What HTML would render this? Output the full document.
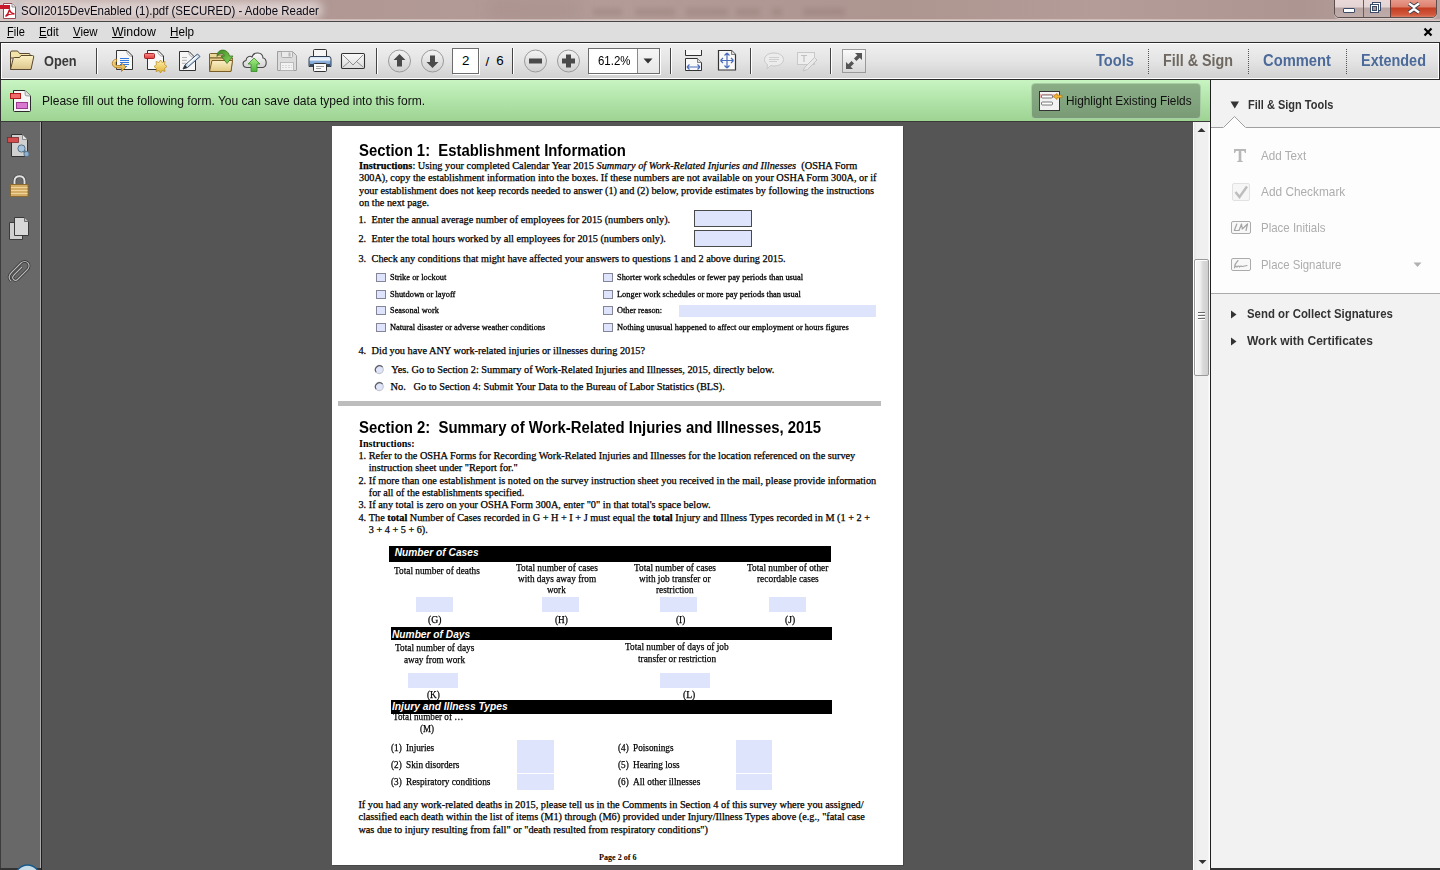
<!DOCTYPE html>
<html><head><meta charset="utf-8">
<style>
*{margin:0;padding:0;box-sizing:border-box}
html,body{width:1440px;height:870px;overflow:hidden;background:#555}
body{position:relative;font-family:"Liberation Sans",sans-serif}
.a{position:absolute}
.t{position:absolute;white-space:pre;transform-origin:0 0}
.sv{position:absolute;overflow:visible}
</style></head><body>
<!-- TITLE BAR -->
<div class="a" style="left:0;top:0;width:1440px;height:21px;background:linear-gradient(90deg,#c9b5b2 0px,#b9a4a0 120px,#b09793 300px,#b39c98 600px,#ad9590 900px,#b49c98 1100px,#ad9692 1300px,#b8a3a0 1440px)"></div>
<div class="a" style="left:0;top:19px;width:1440px;height:1px;background:#cdbbb8"></div>
<div class="a" style="left:0;top:20px;width:1440px;height:1px;background:#d8c8c6"></div>
<div class="a" style="left:0;top:21px;width:1440px;height:1px;background:#464646"></div>
<!-- bg blur words -->
<div class="a" style="left:593px;top:8px;width:29px;height:8px;background:rgba(105,80,76,0.15);filter:blur(2px);border-radius:3px"></div><div class="a" style="left:635px;top:8px;width:40px;height:8px;background:rgba(105,80,76,0.15);filter:blur(2px);border-radius:3px"></div><div class="a" style="left:686px;top:8px;width:42px;height:8px;background:rgba(105,80,76,0.15);filter:blur(2px);border-radius:3px"></div><div class="a" style="left:736px;top:8px;width:24px;height:8px;background:rgba(105,80,76,0.15);filter:blur(2px);border-radius:3px"></div><div class="a" style="left:772px;top:8px;width:10px;height:8px;background:rgba(105,80,76,0.15);filter:blur(2px);border-radius:3px"></div><div class="a" style="left:803px;top:8px;width:42px;height:8px;background:rgba(105,80,76,0.15);filter:blur(2px);border-radius:3px"></div><div class="a" style="left:490px;top:0;width:90px;height:20px;background:rgba(120,90,86,0.10);filter:blur(8px)"></div>
<!-- title glow -->
<div class="a" style="left:0;top:0;width:330px;height:20px;overflow:hidden"><div class="a" style="left:-6px;top:1px;width:328px;height:18px;background:rgba(228,218,217,0.85);filter:blur(5px);border-radius:8px"></div></div>
<div class="a" style="left:14px;top:2px;width:8px;height:17px;background:rgba(170,180,195,0.45);filter:blur(2px)"></div>
<!-- title icon -->
<svg class="sv" style="left:0;top:0" width="18" height="20" viewBox="0 0 18 20">
 <path d="M3.5 3.5 H12 L15.5 7 V18.5 H3.5 Z" fill="#fff" stroke="#9a4a52" stroke-width="1"/>
 <path d="M12 3.5 V7 H15.5" fill="#eee" stroke="#777" stroke-width="0.8"/>
 <rect x="0" y="5" width="10" height="4" fill="#c8182a"/>
 <path d="M5.5 16.5 C7.5 14.5 9 12 9.5 9.5 C10 12 11.5 13.5 14.5 14 C11 13.5 8 14.5 5.5 16.5 Z" fill="none" stroke="#c81020" stroke-width="1.3"/>
</svg>
<!-- window buttons -->
<div class="a" style="left:1334px;top:-3px;width:103px;height:21px;border:1px solid #5b4f4e;border-radius:0 0 5px 5px;overflow:hidden;box-shadow:0 1px 0 rgba(255,255,255,.5)">
  <div class="a" style="left:0;top:0;width:28px;height:20px;background:linear-gradient(#ead9d8 0,#e3d4d3 9px,#b8a5a3 10px,#c0aeac 20px)"></div>
  <div class="a" style="left:28px;top:0;width:1px;height:20px;background:#6a5c5b"></div>
  <div class="a" style="left:29px;top:0;width:26px;height:20px;background:linear-gradient(#ead9d8 0,#e3d4d3 9px,#b8a5a3 10px,#c0aeac 20px)"></div>
  <div class="a" style="left:55px;top:0;width:1px;height:20px;background:#6a3c38"></div>
  <div class="a" style="left:56px;top:0;width:47px;height:20px;background:linear-gradient(#eaa294 0,#dd7f6c 9px,#c33d22 10px,#d25a3d 17px,#e0907e 20px)"></div>
</div>
<div class="a" style="left:1343px;top:8px;width:12px;height:5px;background:#fff;border:1px solid #3b4a66;border-radius:1px"></div>
<svg class="sv" style="left:1369px;top:1px" width="14" height="14" viewBox="0 0 14 14">
 <rect x="3.5" y="1.5" width="8" height="8" fill="#fff" stroke="#3b4a66"/>
 <rect x="1.5" y="3.5" width="8" height="8" fill="#fff" stroke="#3b4a66"/>
 <rect x="3.5" y="5.5" width="4" height="4" fill="#a99" stroke="#3b4a66"/>
</svg>
<svg class="sv" style="left:1406px;top:2px" width="16" height="12" viewBox="0 0 16 12">
 <path d="M3 1.5 L8 5 L13 1.5 M3 10.5 L8 7 L13 10.5" stroke="#3b3b4a" stroke-width="4" fill="none"/>
 <path d="M3 1.5 L8 5 L13 1.5 M3 10.5 L8 7 L13 10.5" stroke="#fff" stroke-width="2.4" fill="none"/>
</svg>
<!-- MENU BAR -->
<div class="a" style="left:0;top:22px;width:1440px;height:20px;background:#dedede"></div>
<div class="a" style="left:0;top:42px;width:1440px;height:1px;background:#2e2e2e"></div>
<svg class="sv" style="left:1423px;top:27px" width="10" height="10" viewBox="0 0 10 10"><path d="M1.5 1.5 L8.5 8.5 M8.5 1.5 L1.5 8.5" stroke="#000" stroke-width="2.2"/></svg>
<!-- TOOLBAR -->
<div class="a" style="left:0;top:42px;width:1440px;height:38px;background:#2b2b2b"></div>
<div class="a" style="left:1px;top:43px;width:1438px;height:36px;background:#fff"></div>
<div class="a" style="left:2px;top:44px;width:1436px;height:34px;background:linear-gradient(#efefef,#e4e4e4 50%,#d2d2d2)"></div>
<!-- GREEN BAR -->
<div class="a" style="left:0;top:80px;width:1210px;height:41px;background:linear-gradient(#c8f4c2,#b1e4a9 50%,#9dd393)"></div>
<div class="a" style="left:0;top:80px;width:1px;height:42px;background:#333"></div>
<div class="a" style="left:0;top:121px;width:1210px;height:1px;background:#3a3a3a"></div>
<!-- toolbar separators -->
<div class="a" style="left:96px;top:48px;width:1px;height:26px;background:#444;box-shadow:1px 0 0 #fff"></div>
<div class="a" style="left:376px;top:48px;width:1px;height:26px;background:#444;box-shadow:1px 0 0 #fff"></div>
<div class="a" style="left:512px;top:48px;width:1px;height:26px;background:#444;box-shadow:1px 0 0 #fff"></div>
<div class="a" style="left:670px;top:48px;width:1px;height:26px;background:#444;box-shadow:1px 0 0 #fff"></div>
<div class="a" style="left:750px;top:48px;width:1px;height:26px;background:#444;box-shadow:1px 0 0 #fff"></div>
<div class="a" style="left:830px;top:48px;width:1px;height:26px;background:#444;box-shadow:1px 0 0 #fff"></div>
<div class="a" style="left:1148px;top:49px;width:1px;height:25px;border-left:1px dotted #555"></div>
<div class="a" style="left:1248px;top:49px;width:1px;height:25px;border-left:1px dotted #555"></div>
<div class="a" style="left:1346px;top:49px;width:1px;height:25px;border-left:1px dotted #555"></div>
<!-- Open folder -->
<svg class="sv" style="left:9px;top:50px" width="26" height="21" viewBox="0 0 26 21">
 <defs><linearGradient id="fg" x1="0" y1="0" x2="0" y2="1"><stop offset="0" stop-color="#fcf2c4"/><stop offset="1" stop-color="#dcc48a"/></linearGradient></defs>
 <path d="M1.5 2.5 Q1.5 1 3 1 H8 Q9 1 9.5 2 L10.5 3.5 H20 Q21 3.5 21 4.5 V8 H1.5 Z" fill="#f4e4a8" stroke="#5a4a34" stroke-width="1"/>
 <path d="M1.5 2 V19.5" stroke="#5a4a34" stroke-width="1"/>
 <path d="M1.5 19.5 L4.2 8.5 Q4.5 7.5 5.5 7.5 H10.5 L12 5.5 H23.5 Q25 5.5 24.7 7 L22 19.5 Z" fill="url(#fg)" stroke="#5a4a34" stroke-width="1" stroke-linejoin="round"/>
</svg>
<!-- icon1: create pdf -->
<svg class="sv" style="left:110px;top:48px" width="26" height="26" viewBox="0 0 26 26">
 <defs><linearGradient id="ag" x1="0" y1="0" x2="0" y2="1"><stop offset="0" stop-color="#fbe9a0"/><stop offset="1" stop-color="#dca83a"/></linearGradient>
 <linearGradient id="rg" x1="0" y1="0" x2="0" y2="1"><stop offset="0" stop-color="#ff8a8a"/><stop offset="1" stop-color="#e03a3a"/></linearGradient>
 <linearGradient id="sg" x1="0" y1="0" x2="0" y2="1"><stop offset="0" stop-color="#fff2b0"/><stop offset="1" stop-color="#e0b030"/></linearGradient></defs>
 <path d="M6.5 2.5 H17 L22.5 8 V21.5 H6.5 Z" fill="#f8f8f8" stroke="#333" stroke-width="1" stroke-linejoin="round"/>
 <path d="M16.5 3 Q17.5 8 22 8.5" fill="none" stroke="#999" stroke-width="0.8"/>
 <path d="M10 10.5 H19 M10 12.5 H19 M10 14.5 H19 M10 16.5 H19 M13 18.5 H17" stroke="#1a6ad8" stroke-width="0.9"/>
 <path d="M6.5 11 C1 12 0.5 19 7 20 L11.5 20 L11.5 23.5 L16 19 L11.5 15 L11.5 17.5 L7.5 17.5 C4.5 17 4.5 14 6.5 13.5 Z" fill="url(#ag)" stroke="#a87418" stroke-width="0.8" stroke-linejoin="round"/>
</svg>
<!-- icon2: combine -->
<svg class="sv" style="left:143px;top:48px" width="26" height="26" viewBox="0 0 26 26">
 <path d="M4.5 2.5 H15 L20.5 8 V21.5 H4.5 Z" fill="#f8f8f8" stroke="#333" stroke-width="1" stroke-linejoin="round"/>
 <path d="M14.5 3 Q15.5 8 20 8.5" fill="none" stroke="#999" stroke-width="0.8"/>
 <rect x="1.5" y="5.5" width="10" height="5" rx="1" fill="url(#rg)" stroke="#9a1a1a" stroke-width="0.9"/>
 <path d="M17.5 12 L19 14.5 L22 13.5 L21.5 16.5 L24 18.5 L21.5 20.5 L22 23.5 L19 22.5 L17.5 25 L16 22.5 L13 23.5 L13.5 20.5 L11 18.5 L13.5 16.5 L13 13.5 L16 14.5 Z" fill="url(#sg)" stroke="#b88a20" stroke-width="0.7"/>
</svg>
<!-- icon3: edit doc -->
<svg class="sv" style="left:176px;top:48px" width="26" height="26" viewBox="0 0 26 26">
 <path d="M3.5 3.5 H13 L19.5 10 V22.5 H3.5 Z" fill="#f6f6f6" stroke="#333" stroke-width="1" stroke-linejoin="round"/>
 <path d="M12.5 4 Q13.5 9 18 9.5" fill="none" stroke="#999" stroke-width="0.8"/>
 <path d="M6 9.5 H11 M6 12.3 H11 M6 15.3 H10" stroke="#aaa" stroke-width="0.9"/>
 <path d="M7 21 L9 17 L21.5 6 L24 8.5 L11.5 19.5 Z" fill="#cfe2f4" stroke="#3a4e6a" stroke-width="1" stroke-linejoin="round"/>
 <path d="M12 16 L20.5 8.5" stroke="#fff" stroke-width="1.4"/>
 <path d="M7 21 L9 17 L11.5 19.5 Z" fill="#333"/>
</svg>
<!-- icon4: open folder green arrow -->
<svg class="sv" style="left:208px;top:48px" width="26" height="26" viewBox="0 0 26 26">
 <defs><linearGradient id="fg2" x1="0" y1="0" x2="0" y2="1"><stop offset="0" stop-color="#fbf0c8"/><stop offset="1" stop-color="#e2c880"/></linearGradient>
 <linearGradient id="gg" x1="0" y1="0" x2="1" y2="1"><stop offset="0" stop-color="#3e8a20"/><stop offset="1" stop-color="#8ad860"/></linearGradient></defs>
 <path d="M1.5 6.5 Q1.5 5.5 2.5 5.5 H9 L10 7 H15 V10 H1.5 Z" fill="#ecd898" stroke="#7a5e2a" stroke-width="1"/>
 <path d="M1.5 6 V23 H23 L24.5 10 H1.5" fill="#e6cf8c" stroke="#7a5e2a" stroke-width="1"/>
 <path d="M1.5 23.5 L4 12.5 H24.5 L23 23.5 Z" fill="url(#fg2)" stroke="#7a5e2a" stroke-width="1" stroke-linejoin="round"/>
 <path d="M9 8.5 C8.5 0.5 19.5 -0.5 21.5 8 L25 8 L19 15.5 L13 8 L16.5 8 C15 4.5 11.5 4.5 9 8.5 Z" fill="url(#gg)" stroke="#2e6a18" stroke-width="0.7" stroke-linejoin="round"/>
</svg>
<!-- icon5: cloud -->
<svg class="sv" style="left:241px;top:49px" width="27" height="24" viewBox="0 0 27 24">
 <defs><linearGradient id="clg" x1="0" y1="0" x2="0" y2="1"><stop offset="0" stop-color="#fafafa"/><stop offset="1" stop-color="#d4d4d4"/></linearGradient>
 <linearGradient id="ug" x1="0" y1="0" x2="0" y2="1"><stop offset="0" stop-color="#a8ec88"/><stop offset="1" stop-color="#4cb43a"/></linearGradient></defs>
 <path d="M6 18.5 C1.5 18.5 0.5 12.5 5 11.5 C5 7.5 9 6.5 11 8 C12.5 2.5 21.5 2.5 22 9 C26 9.5 26.5 17.5 22 18.5 Z" fill="url(#clg)" stroke="#4a4a4a" stroke-width="1.1"/>
 <path d="M13 9 L19 15 H16 V22.5 H10 V15 H7 Z" fill="url(#ug)" stroke="#3a8a2a" stroke-width="0.8" stroke-linejoin="round"/>
</svg>
<!-- icon6: save (disabled) -->
<svg class="sv" style="left:276px;top:50px" width="22" height="22" viewBox="0 0 22 22">
 <path d="M1.5 1.5 H16.5 L20.5 5.5 V20 Q20.5 20.5 20 20.5 H2 Q1.5 20.5 1.5 20 Z" fill="#dcdcdc" stroke="#9e9e9e" stroke-width="1"/>
 <rect x="5.5" y="1.5" width="11" height="6" rx="1" fill="#eaeaea" stroke="#a8a8a8" stroke-width="0.9"/>
 <rect x="12.5" y="2.5" width="2" height="4" fill="#b8b8b8"/>
 <rect x="4.5" y="12.5" width="13" height="8" fill="#f2f2f2" stroke="#b0b0b0" stroke-width="0.8"/>
 <path d="M6 15.5 H16 M6 17.5 H16" stroke="#cfcfcf" stroke-width="0.8" stroke-dasharray="2 1"/>
</svg>
<!-- icon7: print -->
<svg class="sv" style="left:307px;top:48px" width="26" height="26" viewBox="0 0 26 26">
 <defs><linearGradient id="pg" x1="0" y1="0" x2="0" y2="1"><stop offset="0" stop-color="#cfe0f4"/><stop offset="0.35" stop-color="#f4f8fc"/><stop offset="0.45" stop-color="#90b4e0"/><stop offset="1" stop-color="#6a94c8"/></linearGradient></defs>
 <rect x="6.5" y="1.5" width="13" height="9" rx="1" fill="#f6f6f6" stroke="#333" stroke-width="1"/>
 <path d="M4 8.5 H22 Q24 8.5 24 11 V18.5 H2 V11 Q2 8.5 4 8.5 Z" fill="url(#pg)" stroke="#2e3e52" stroke-width="1"/>
 <rect x="3" y="16" width="20" height="2.5" fill="#3a4a5a"/>
 <rect x="6.5" y="15.5" width="13" height="8" rx="1" fill="#fafafa" stroke="#333" stroke-width="1"/>
 <path d="M9 18.5 H17 M9 20.5 H14" stroke="#888" stroke-width="0.8"/>
</svg>
<!-- icon8: envelope -->
<svg class="sv" style="left:340px;top:52px" width="26" height="18" viewBox="0 0 26 18">
 <defs><linearGradient id="eg" x1="0" y1="0" x2="0" y2="1"><stop offset="0" stop-color="#fafafa"/><stop offset="1" stop-color="#dcdcdc"/></linearGradient></defs>
 <rect x="1.5" y="1.5" width="23" height="15" rx="1.2" fill="url(#eg)" stroke="#333" stroke-width="1.1"/>
 <path d="M3 3 L13 13 L23 3 M3 15 L9.5 9.5 M23 15 L16.5 9.5" stroke="#777" stroke-width="0.8" fill="none"/>
</svg>
<!-- nav circles -->
<svg class="sv" style="left:387px;top:49px" width="25" height="24" viewBox="0 0 25 24">
 <circle cx="12.5" cy="12" r="11" fill="url(#cg)" stroke="#9a9a9a"/>
 <defs><linearGradient id="cg" x1="0" y1="0" x2="0" y2="1"><stop offset="0" stop-color="#f4f4f4"/><stop offset="1" stop-color="#d0d0d0"/></linearGradient></defs>
 <path d="M12.5 5 L18.5 11 H15 V17.5 H10 V11 H6.5 Z" fill="#4a4a4a"/>
</svg>
<svg class="sv" style="left:420px;top:49px" width="25" height="24" viewBox="0 0 25 24">
 <circle cx="12.5" cy="12" r="11" fill="url(#cg)" stroke="#9a9a9a"/>
 <path d="M12.5 19 L18.5 13 H15 V6.5 H10 V13 H6.5 Z" fill="#4a4a4a"/>
</svg>
<div class="a" style="left:452px;top:48px;width:27px;height:26px;background:#fff;border:1px solid #6d6d6d;box-shadow:1px 1px 0 #fff"></div>
<svg class="sv" style="left:523px;top:49px" width="25" height="24" viewBox="0 0 25 24">
 <circle cx="12.5" cy="12" r="11" fill="url(#cg)" stroke="#9a9a9a"/>
 <rect x="6" y="9.5" width="13" height="5" fill="#4a4a4a"/>
</svg>
<svg class="sv" style="left:556px;top:49px" width="25" height="24" viewBox="0 0 25 24">
 <circle cx="12.5" cy="12" r="11" fill="url(#cg)" stroke="#9a9a9a"/>
 <path d="M10 5.5 H15 V9.5 H19 V14.5 H15 V18.5 H10 V14.5 H6 V9.5 H10 Z" fill="#4a4a4a"/>
</svg>
<div class="a" style="left:588px;top:48px;width:72px;height:26px;background:#fff;border:1px solid #6d6d6d;box-shadow:1px 1px 0 #fff"></div>
<div class="a" style="left:637px;top:49px;width:22px;height:24px;background:linear-gradient(#f6f6f6,#e6e6e6);border-left:1px solid #8a8a8a"></div>
<svg class="sv" style="left:643px;top:58px" width="10" height="6" viewBox="0 0 10 6"><path d="M0.5 0.5 H9.5 L5 5.5 Z" fill="#333"/></svg>
<!-- fit width -->
<svg class="sv" style="left:685px;top:50px" width="18" height="21" viewBox="0 0 18 21">
 <path d="M0.5 0 V5.5 H16.5 V0" fill="#f8f8f8" stroke="#333"/>
 <path d="M0.5 20.5 V8.5 H12.5 L16.5 12.5 V20.5 Z" fill="#f8f8f8" stroke="#333"/>
 <path d="M12.5 8.5 V12.5 H16.5" fill="#ddd" stroke="#666" stroke-width="0.8"/>
 <path d="M2 17 H15 M2 17 L4.5 14.5 M2 17 L4.5 19.5 M15 17 L12.5 14.5 M15 17 L12.5 19.5" stroke="#4b6dbb" stroke-width="1.2" fill="none"/>
</svg>
<!-- fit page -->
<svg class="sv" style="left:718px;top:50px" width="19" height="21" viewBox="0 0 19 21">
 <path d="M0.5 0.5 H13.5 L17.5 4.5 V20 H0.5 Z" fill="#f8f8f8" stroke="#333" stroke-width="1.2"/>
 <path d="M13.5 0.5 V4.5 H17.5" fill="#ddd" stroke="#666" stroke-width="0.8"/>
 <path d="M9 3 V18 M2.5 10.5 H15.5 M9 3 L6.5 5.5 M9 3 L11.5 5.5 M9 18 L6.5 15.5 M9 18 L11.5 15.5 M2.5 10.5 L5 8 M2.5 10.5 L5 13 M15.5 10.5 L13 8 M15.5 10.5 L13 13" stroke="#4b6dbb" stroke-width="1.2" fill="none"/>
</svg>
<!-- comment bubble (disabled) -->
<svg class="sv" style="left:764px;top:52px" width="20" height="18" viewBox="0 0 20 18">
 <path d="M10 1 C15.5 1 19.5 3.8 19.5 7.5 C19.5 11.2 15.5 14 10 14 C8.5 14 7.5 13.8 6.5 13.5 L3 17 L3.5 12.5 C1.5 11.3 0.5 9.5 0.5 7.5 C0.5 3.8 4.5 1 10 1 Z" fill="#ececec" stroke="#c8c8c8"/>
 <path d="M5 5.5 H15 M5 7.5 H15 M5 9.5 H13" stroke="#c8c8c8" stroke-width="0.8"/>
</svg>
<!-- text pen (disabled) -->
<svg class="sv" style="left:797px;top:52px" width="21" height="20" viewBox="0 0 21 20">
 <rect x="0.5" y="0.5" width="17" height="12" fill="#eee" stroke="#c8c8c8"/>
 <path d="M4 3.5 H10 M7 3.5 V10" stroke="#c0c0c0" stroke-width="1.2"/>
 <path d="M6 19 L8 15 L17.5 5.5 L20 8 L10.5 17.5 Z" fill="#e8e8e8" stroke="#c4c4c4"/>
</svg>
<!-- fullscreen -->
<div class="a" style="left:842px;top:49px;width:24px;height:24px;border:1px solid #9a9a9a;background:linear-gradient(#fafafa,#d8d8d8)"></div>
<svg class="sv" style="left:845px;top:52px" width="18" height="18" viewBox="0 0 18 18">
 <path d="M17 1 H10 L12.3 3.3 L9 6.6 L11.4 9 L14.7 5.7 L17 8 Z" fill="#555"/>
 <path d="M1 17 H8 L5.7 14.7 L9 11.4 L6.6 9 L3.3 12.3 L1 10 Z" fill="#555"/>
</svg>
<!-- green bar icon -->
<svg class="sv" style="left:9px;top:89px" width="24" height="25" viewBox="0 0 24 25">
 <path d="M4.5 1.5 H16 L21.5 7 V21.5 Q21.5 22.5 20.5 22.5 H5.5 Q4.5 22.5 4.5 21.5 Z" fill="#f6f6f6" stroke="#2a2a2a" stroke-width="1"/>
 <path d="M16 1.5 Q16 6 16.5 6.5 Q17 7 21.5 7" fill="#e4e4e4" stroke="#888" stroke-width="0.8"/>
 <rect x="1.5" y="4.5" width="10" height="5" fill="#f06a6a" stroke="#b01c1c"/>
 <rect x="7.5" y="13.5" width="11" height="6" fill="#d878d0" stroke="#9a3a8a"/>
</svg>
<!-- highlight existing fields button -->
<div class="a" style="left:1031px;top:83px;width:170px;height:36px;border-radius:4px;background:linear-gradient(#8aad86,#7a9b76);border:1px solid #a8cca3"></div>
<svg class="sv" style="left:1038px;top:90px" width="25" height="22" viewBox="0 0 25 22">
 <rect x="1.5" y="1.5" width="20" height="19" fill="#f2f2f2" stroke="#333" stroke-width="1"/>
 <rect x="2" y="4" width="18" height="4" fill="#f5b8b8"/>
 <rect x="3.5" y="5" width="11" height="3" rx="1" fill="#fff" stroke="#555" stroke-width="0.8"/>
 <rect x="3.5" y="12" width="11" height="3" rx="1" fill="#fff" stroke="#555" stroke-width="0.8"/>
 <path d="M15.5 6.5 L19 3.5 V5.2 H24 V7.8 H19 V9.5 Z" fill="#f4b632" stroke="#b07a10" stroke-width="0.7"/>
</svg>
<!-- LEFT NAV -->
<div class="a" style="left:0;top:122px;width:41px;height:748px;background:#686868"></div>
<div class="a" style="left:0;top:122px;width:1px;height:748px;background:#3c3c3c"></div>
<div class="a" style="left:40px;top:122px;width:1px;height:748px;background:#a9a9a9"></div>
<div class="a" style="left:41px;top:122px;width:1px;height:748px;background:#1f1f1f"></div>
<div class="a" style="left:0;top:868px;width:41px;height:2px;background:#333"></div>
<svg class="sv" style="left:6px;top:133px" width="25" height="25" viewBox="0 0 25 25">
 <path d="M5.5 1.5 H16.5 L21.5 6.5 V23.5 H5.5 Z" fill="#d0d0d0" stroke="#333" stroke-width="1"/>
 <path d="M16.5 1.5 V6.5 H21.5" fill="#e6e6e6" stroke="#777" stroke-width="0.8"/>
 <rect x="1.5" y="4.5" width="11" height="5" fill="#d24d4d" stroke="#7a2a2a" stroke-width="0.8"/>
 <path d="M16.5 16.5 L20.5 20.5" stroke="#5a7a92" stroke-width="3"/>
 <circle cx="15.5" cy="15.5" r="3.6" fill="#a8c4dc" stroke="#56728a" stroke-width="1"/>
 <circle cx="20.5" cy="21" r="2.6" fill="#90b0cc" stroke="#56728a" stroke-width="0.9"/>
</svg>
<svg class="sv" style="left:9px;top:174px" width="21" height="24" viewBox="0 0 21 24">
 <path d="M5.5 11 V7 C5.5 0.5 15.5 0.5 15.5 7 V11" fill="none" stroke="#444" stroke-width="3.4"/>
 <path d="M5.5 11 V7 C5.5 0.5 15.5 0.5 15.5 7 V11" fill="none" stroke="#e2e2e2" stroke-width="2"/>
 <rect x="1.5" y="10.5" width="17.5" height="12" fill="#d3ad66" stroke="#8a6a30"/>
 <path d="M2 13.5 H18.5 M2 16.5 H18.5 M2 19.5 H18.5" stroke="#f0d49a" stroke-width="1.2"/>
</svg>
<svg class="sv" style="left:8px;top:216px" width="23" height="25" viewBox="0 0 23 25">
 <path d="M1.5 6.5 H14.5 V23.5 H1.5 Z" fill="#d0d0d0" stroke="#3a3a3a"/>
 <path d="M6.5 1.5 H16.5 L20.5 5.5 V19.5 H6.5 Z" fill="#d8d8d8" stroke="#3a3a3a"/>
 <path d="M16.5 1.5 V5.5 H20.5" fill="#bbb" stroke="#555" stroke-width="0.8"/>
</svg>
<svg class="sv" style="left:7px;top:259px" width="24" height="25" viewBox="0 0 24 25">
 <path d="M4 22 C1 19 2 16 4.5 13.5 L14 4 C16 2 19.5 2 21 4 C22.5 5.5 22.5 8.5 20.5 10.5 L11 20 C9.5 21.5 7.5 21.5 6.5 20.5 C5.5 19.5 5.5 17.5 7 16 L15 8" fill="none" stroke="#2e2e2e" stroke-width="2.6"/>
 <path d="M4 22 C1 19 2 16 4.5 13.5 L14 4 C16 2 19.5 2 21 4 C22.5 5.5 22.5 8.5 20.5 10.5 L11 20 C9.5 21.5 7.5 21.5 6.5 20.5 C5.5 19.5 5.5 17.5 7 16 L15 8" fill="none" stroke="#b8b8b8" stroke-width="1.2"/>
</svg>
<!-- windows orb peeking -->
<svg class="sv" style="left:14px;top:864px" width="28" height="6" viewBox="0 0 28 6">
 <ellipse cx="13.5" cy="14" rx="12.5" ry="13" fill="#c8dce8" stroke="#1a5a8a" stroke-width="1.5"/>
</svg>
<!-- DOC AREA -->
<div class="a" style="left:42px;top:122px;width:1151px;height:748px;background:#555555"></div>
<!-- PAGE -->
<div class="a" style="left:333px;top:127px;width:571px;height:739px;background:#474747"></div>
<div class="a" style="left:332px;top:126px;width:571px;height:739px;background:#fff"></div>
<!-- SCROLLBAR -->
<div class="a" style="left:1193px;top:122px;width:17px;height:748px;background:linear-gradient(90deg,#fff 0,#fff 1px,#e6e6e6 1px,#f0f0f0 4px,#f0f0f0 15px,#fdfdfd 16px)"></div>
<svg class="sv" style="left:1197px;top:127px" width="9" height="6" viewBox="0 0 9 6"><path d="M0.5 5 L4.5 1 L8.5 5 Z" fill="#333"/></svg>
<svg class="sv" style="left:1198px;top:859px" width="9" height="6" viewBox="0 0 9 6"><path d="M0.5 1 L4.5 5 L8.5 1 Z" fill="#333"/></svg>
<div class="a" style="left:1194px;top:259px;width:15px;height:117px;border:1px solid #989898;border-radius:2px;background:linear-gradient(90deg,#f6f6f6 0,#f0f0f0 40%,#dadada 60%,#cfcfcf 100%);box-shadow:inset 1px 1px 0 #fff"></div>
<div class="a" style="left:1198px;top:312px;width:7px;height:1px;background:#6a6a6a;box-shadow:0 1px 0 #fff,0 3px 0 #6a6a6a,0 4px 0 #fff,0 6px 0 #6a6a6a,0 7px 0 #fff"></div>
<!-- RIGHT PANEL -->
<div class="a" style="left:1210px;top:80px;width:230px;height:790px;background:#f2f2f2"></div>
<div class="a" style="left:1210px;top:80px;width:1px;height:790px;background:#1f1f1f"></div>
<div class="a" style="left:1211px;top:128px;width:229px;height:165px;background:#fdfdfd"></div>
<div class="a" style="left:1211px;top:127px;width:229px;height:1px;background:#a0a0a0"></div>
<svg class="sv" style="left:1223px;top:115px" width="23" height="14" viewBox="0 0 23 14"><path d="M0 13 L11.5 1.5 L23 13" fill="#fdfdfd" stroke="#a0a0a0" stroke-width="1"/><rect x="0" y="12.6" width="23" height="2" fill="#fdfdfd"/></svg>
<div class="a" style="left:1211px;top:293px;width:229px;height:1px;background:#ababab"></div>
<div class="a" style="left:1210px;top:868px;width:230px;height:2px;background:#333"></div>
<svg class="sv" style="left:1230px;top:101px" width="10" height="8" viewBox="0 0 10 8"><path d="M0.5 0.5 H9 L4.75 7.5 Z" fill="#333"/></svg>
<svg class="sv" style="left:1230px;top:310px" width="7" height="9" viewBox="0 0 7 9"><path d="M1 0.5 L6.5 4.5 L1 8.5 Z" fill="#333"/></svg>
<svg class="sv" style="left:1230px;top:337px" width="7" height="9" viewBox="0 0 7 9"><path d="M1 0.5 L6.5 4.5 L1 8.5 Z" fill="#333"/></svg>
<!-- tool icons -->
<svg class="sv" style="left:1233px;top:148px" width="14" height="15" viewBox="0 0 14 15">
 <path d="M1 1 H13 V5 H12 L11 3 H8.3 V12.5 L10 13.5 V14 H4 V13.5 L5.7 12.5 V3 H3 L2 5 H1 Z" fill="#b8b8b8"/>
</svg>
<div class="a" style="left:1232px;top:183px;width:18px;height:18px;border:1px solid #e2e2e2;border-radius:2px;background:#f6f6f6"></div>
<svg class="sv" style="left:1234px;top:185px" width="14" height="14" viewBox="0 0 14 14"><path d="M1.5 7 L5.5 12 L13 1.5" fill="none" stroke="#bdbdbd" stroke-width="2.4"/></svg>
<svg class="sv" style="left:1230px;top:220px" width="22" height="15" viewBox="0 0 22 15">
 <rect x="1.5" y="1.5" width="19" height="12" rx="1.5" fill="#f8f8f8" stroke="#ababab" stroke-width="1"/>
 <path d="M6.8 4 L4.3 10.5 H8.3 M9 10.5 L11.5 4 L12.3 9 L17.5 4 L16 10.5" stroke="#a4a4a4" stroke-width="1.2" fill="none" stroke-linejoin="round" stroke-linecap="round"/>
</svg>
<svg class="sv" style="left:1230px;top:257px" width="22" height="15" viewBox="0 0 22 15">
 <rect x="1.5" y="1.5" width="19" height="12" rx="1.5" fill="#f8f8f8" stroke="#ababab" stroke-width="1"/>
 <path d="M8 3.5 C6 5.5 4.5 8.5 4.5 10.5 C5.5 9.5 6.5 8.5 7 10 C8 9 9 8.5 9.5 9.8 C10.5 8.5 11.5 9 12.5 9.5 C13.5 9 15 9 17 8.5" stroke="#a4a4a4" stroke-width="1.1" fill="none" stroke-linecap="round"/>
</svg>
<svg class="sv" style="left:1413px;top:262px" width="9" height="6" viewBox="0 0 9 6"><path d="M0.5 0.5 H8.5 L4.5 5 Z" fill="#b0b0b0"/></svg>
<!-- form fields section 1 -->
<div class="a" style="left:694px;top:210px;width:58px;height:17px;background:#dde4fb;border:1px solid #4a4a4a"></div>
<div class="a" style="left:694px;top:230px;width:58px;height:17px;background:#dde4fb;border:1px solid #4a4a4a"></div>
<!-- checkboxes -->
<div class="a" style="left:376px;top:273px;width:10px;height:9px;background:#dde4fb;border:1px solid #85859a"></div>
<div class="a" style="left:376px;top:290px;width:10px;height:9px;background:#dde4fb;border:1px solid #85859a"></div>
<div class="a" style="left:376px;top:306px;width:10px;height:9px;background:#dde4fb;border:1px solid #85859a"></div>
<div class="a" style="left:376px;top:323px;width:10px;height:9px;background:#dde4fb;border:1px solid #85859a"></div>
<div class="a" style="left:603px;top:273px;width:10px;height:9px;background:#dde4fb;border:1px solid #85859a"></div>
<div class="a" style="left:603px;top:290px;width:10px;height:9px;background:#dde4fb;border:1px solid #85859a"></div>
<div class="a" style="left:603px;top:306px;width:10px;height:9px;background:#dde4fb;border:1px solid #85859a"></div>
<div class="a" style="left:603px;top:323px;width:10px;height:9px;background:#dde4fb;border:1px solid #85859a"></div>
<div class="a" style="left:679px;top:305px;width:197px;height:12px;background:#dde4fb"></div>
<!-- radios -->
<svg class="sv" style="left:373px;top:363px" width="12" height="12" viewBox="0 0 12 12"><circle cx="6.2" cy="6.5" r="4.1" fill="#dfe5fb" stroke="#c4c4cc" stroke-width="1.1"/><path d="M3.2 9.3 A4.1 4.1 0 0 1 9.6 4.2" stroke="#5a5a62" stroke-width="1.1" fill="none"/></svg>
<svg class="sv" style="left:373px;top:380px" width="12" height="12" viewBox="0 0 12 12"><circle cx="6.2" cy="6.5" r="4.1" fill="#dfe5fb" stroke="#c4c4cc" stroke-width="1.1"/><path d="M3.2 9.3 A4.1 4.1 0 0 1 9.6 4.2" stroke="#5a5a62" stroke-width="1.1" fill="none"/></svg>
<!-- grey bar -->
<div class="a" style="left:338px;top:401px;width:543px;height:5px;background:#bdbdbd"></div>
<!-- black bars -->
<div class="a" style="left:389px;top:546px;width:442px;height:16px;background:#000"></div>
<div class="a" style="left:391px;top:627px;width:441px;height:13px;background:#000"></div>
<div class="a" style="left:391px;top:700px;width:441px;height:14px;background:#000"></div>
<!-- table fields -->
<div class="a" style="left:416px;top:597px;width:37px;height:15px;background:#dde4fb"></div>
<div class="a" style="left:542px;top:597px;width:37px;height:15px;background:#dde4fb"></div>
<div class="a" style="left:660px;top:597px;width:37px;height:15px;background:#dde4fb"></div>
<div class="a" style="left:769px;top:597px;width:37px;height:15px;background:#dde4fb"></div>
<div class="a" style="left:408px;top:673px;width:50px;height:15px;background:#dde4fb"></div>
<div class="a" style="left:660px;top:673px;width:50px;height:15px;background:#dde4fb"></div>
<div class="a" style="left:517px;top:740px;width:37px;height:33px;background:#dde4fb"></div>
<div class="a" style="left:517px;top:774px;width:37px;height:16px;background:#dde4fb"></div>
<div class="a" style="left:736px;top:740px;width:36px;height:33px;background:#dde4fb"></div>
<div class="a" style="left:736px;top:774px;width:36px;height:16px;background:#dde4fb"></div>
<div class="t" style="left:21.00px;top:4.00px;font:normal normal 13.116px/13.116px 'Liberation Sans',sans-serif;color:#0a0a14;transform:scaleX(0.8753)">SOII2015DevEnabled (1).pdf (SECURED) - Adobe Reader</div>
<div class="t" style="left:7.20px;top:26.00px;font:normal normal 12.464px/12.464px 'Liberation Sans',sans-serif;color:#000;transform:scaleX(0.8862)"><u>F</u>ile</div>
<div class="t" style="left:39.30px;top:26.00px;font:normal normal 12.464px/12.464px 'Liberation Sans',sans-serif;color:#000;transform:scaleX(0.9172)"><u>E</u>dit</div>
<div class="t" style="left:72.90px;top:26.00px;font:normal normal 12.464px/12.464px 'Liberation Sans',sans-serif;color:#000;transform:scaleX(0.9181)"><u>V</u>iew</div>
<div class="t" style="left:112.20px;top:26.00px;font:normal normal 12.464px/12.464px 'Liberation Sans',sans-serif;color:#000;transform:scaleX(0.9880)"><u>W</u>indow</div>
<div class="t" style="left:170.10px;top:26.00px;font:normal normal 12.464px/12.464px 'Liberation Sans',sans-serif;color:#000;transform:scaleX(0.9401)"><u>H</u>elp</div>
<div class="t" style="left:44.00px;top:54.00px;font:normal bold 14.348px/14.348px 'Liberation Sans',sans-serif;color:#3a3a3a;transform:scaleX(0.8917)">Open</div>
<div class="t" style="left:461.90px;top:54.00px;font:normal normal 13.333px/13.333px 'Liberation Sans',sans-serif;color:#000">2</div>
<div class="t" style="left:485.50px;top:55.00px;font:normal normal 13.333px/13.333px 'Liberation Sans',sans-serif;color:#000">/</div>
<div class="t" style="left:496.30px;top:54.00px;font:normal normal 13.333px/13.333px 'Liberation Sans',sans-serif;color:#000">6</div>
<div class="t" style="left:597.50px;top:54.00px;font:normal normal 13.188px/13.188px 'Liberation Sans',sans-serif;color:#000;transform:scaleX(0.8691)">61.2%</div>
<div class="t" style="left:1096.00px;top:52.00px;font:normal bold 16.087px/16.087px 'Liberation Sans',sans-serif;color:#4b6a9a;transform:scaleX(0.9112)">Tools</div>
<div class="t" style="left:1163.00px;top:52.00px;font:normal bold 16.087px/16.087px 'Liberation Sans',sans-serif;color:#6e6860;transform:scaleX(0.8901)">Fill &amp; Sign</div>
<div class="t" style="left:1263.00px;top:52.00px;font:normal bold 16.087px/16.087px 'Liberation Sans',sans-serif;color:#4b6a9a;transform:scaleX(0.9166)">Comment</div>
<div class="t" style="left:1361.00px;top:52.00px;font:normal bold 16.087px/16.087px 'Liberation Sans',sans-serif;color:#4b6a9a;transform:scaleX(0.8977)">Extended</div>
<div class="t" style="left:42.30px;top:95.00px;font:normal normal 12.464px/12.464px 'Liberation Sans',sans-serif;color:#101010;transform:scaleX(0.9674)">Please fill out the following form. You can save data typed into this form.</div>
<div class="t" style="left:1066.30px;top:95.00px;font:normal normal 12.609px/12.609px 'Liberation Sans',sans-serif;color:#101010;transform:scaleX(0.9391)">Highlight Existing Fields</div>
<div class="t" style="left:1247.50px;top:99.00px;font:normal bold 12.609px/12.609px 'Liberation Sans',sans-serif;color:#333;transform:scaleX(0.8739)">Fill &amp; Sign Tools</div>
<div class="t" style="left:1261.40px;top:150.00px;font:normal normal 12.609px/12.609px 'Liberation Sans',sans-serif;color:#adadad;transform:scaleX(0.9255)">Add Text</div>
<div class="t" style="left:1261.40px;top:186.00px;font:normal normal 12.609px/12.609px 'Liberation Sans',sans-serif;color:#adadad;transform:scaleX(0.9409)">Add Checkmark</div>
<div class="t" style="left:1261.30px;top:222.00px;font:normal normal 12.609px/12.609px 'Liberation Sans',sans-serif;color:#adadad;transform:scaleX(0.9112)">Place Initials</div>
<div class="t" style="left:1261.30px;top:259.00px;font:normal normal 12.609px/12.609px 'Liberation Sans',sans-serif;color:#adadad;transform:scaleX(0.9043)">Place Signature</div>
<div class="t" style="left:1247.00px;top:308.00px;font:normal bold 12.464px/12.464px 'Liberation Sans',sans-serif;color:#333;transform:scaleX(0.9165)">Send or Collect Signatures</div>
<div class="t" style="left:1247.00px;top:335.00px;font:normal bold 12.464px/12.464px 'Liberation Sans',sans-serif;color:#333;transform:scaleX(0.9643)">Work with Certificates</div>
<div class="t" style="left:359.00px;top:144.00px;font:normal bold 14.888px/14.888px 'Liberation Sans',sans-serif;color:#000;transform:scaleY(1.070);transform-origin:0 12.00px">Section 1:  Establishment Information</div>
<div class="t" style="left:359.00px;top:161.00px;font:normal normal 10.330px/10.330px 'Liberation Serif',serif;color:#000;-webkit-text-stroke:0.25px #000"><b>Instructions</b>: Using your completed Calendar Year 2015 <i>Summary of Work-Related Injuries and Illnesses</i>  (OSHA Form</div>
<div class="t" style="left:359.00px;top:173.00px;font:normal normal 10.286px/10.286px 'Liberation Serif',serif;color:#000;-webkit-text-stroke:0.25px #000">300A), copy the establishment information into the boxes. If these numbers are not available on your OSHA Form 300A, or if</div>
<div class="t" style="left:359.00px;top:186.00px;font:normal normal 10.271px/10.271px 'Liberation Serif',serif;color:#000;-webkit-text-stroke:0.25px #000">your establishment does not keep records needed to answer (1) and (2) below, provide estimates by following the instructions</div>
<div class="t" style="left:359.00px;top:198.00px;font:normal normal 10.280px/10.280px 'Liberation Serif',serif;color:#000;-webkit-text-stroke:0.25px #000">on the next page.</div>
<div class="t" style="left:358.40px;top:215.00px;font:normal normal 10.280px/10.280px 'Liberation Serif',serif;color:#000;-webkit-text-stroke:0.25px #000">1.</div>
<div class="t" style="left:371.60px;top:215.00px;font:normal normal 10.258px/10.258px 'Liberation Serif',serif;color:#000;-webkit-text-stroke:0.25px #000">Enter the annual average number of employees for 2015 (numbers only).</div>
<div class="t" style="left:358.40px;top:234.00px;font:normal normal 10.280px/10.280px 'Liberation Serif',serif;color:#000;-webkit-text-stroke:0.25px #000">2.</div>
<div class="t" style="left:371.60px;top:234.00px;font:normal normal 10.263px/10.263px 'Liberation Serif',serif;color:#000;-webkit-text-stroke:0.25px #000">Enter the total hours worked by all employees for 2015 (numbers only).</div>
<div class="t" style="left:358.40px;top:254.00px;font:normal normal 10.280px/10.280px 'Liberation Serif',serif;color:#000;-webkit-text-stroke:0.25px #000">3.</div>
<div class="t" style="left:371.60px;top:254.00px;font:normal normal 10.268px/10.268px 'Liberation Serif',serif;color:#000;-webkit-text-stroke:0.25px #000">Check any conditions that might have affected your answers to questions 1 and 2 above during 2015.</div>
<div class="t" style="left:390.00px;top:273.00px;font:normal normal 9.000px/9.000px 'Liberation Serif',serif;color:#000;transform:scaleX(0.9324);-webkit-text-stroke:0.3px #000">Strike or lockout</div>
<div class="t" style="left:390.00px;top:290.00px;font:normal normal 9.000px/9.000px 'Liberation Serif',serif;color:#000;transform:scaleX(0.9366);-webkit-text-stroke:0.3px #000">Shutdown or layoff</div>
<div class="t" style="left:390.00px;top:306.00px;font:normal normal 9.000px/9.000px 'Liberation Serif',serif;color:#000;transform:scaleX(0.9272);-webkit-text-stroke:0.3px #000">Seasonal work</div>
<div class="t" style="left:390.00px;top:323.00px;font:normal normal 9.000px/9.000px 'Liberation Serif',serif;color:#000;transform:scaleX(0.9317);-webkit-text-stroke:0.3px #000">Natural disaster or adverse weather conditions</div>
<div class="t" style="left:617.10px;top:273.00px;font:normal normal 9.000px/9.000px 'Liberation Serif',serif;color:#000;transform:scaleX(0.9308);-webkit-text-stroke:0.3px #000">Shorter work schedules or fewer pay periods than usual</div>
<div class="t" style="left:617.10px;top:290.00px;font:normal normal 9.000px/9.000px 'Liberation Serif',serif;color:#000;transform:scaleX(0.9309);-webkit-text-stroke:0.3px #000">Longer work schedules or more pay periods than usual</div>
<div class="t" style="left:617.10px;top:306.00px;font:normal normal 9.000px/9.000px 'Liberation Serif',serif;color:#000;transform:scaleX(0.9255);-webkit-text-stroke:0.3px #000">Other reason:</div>
<div class="t" style="left:617.10px;top:323.00px;font:normal normal 9.000px/9.000px 'Liberation Serif',serif;color:#000;transform:scaleX(0.9308);-webkit-text-stroke:0.3px #000">Nothing unusual happened to affect our employment or hours figures</div>
<div class="t" style="left:358.40px;top:346.00px;font:normal normal 10.280px/10.280px 'Liberation Serif',serif;color:#000;-webkit-text-stroke:0.25px #000">4.</div>
<div class="t" style="left:371.60px;top:346.00px;font:normal normal 10.295px/10.295px 'Liberation Serif',serif;color:#000;-webkit-text-stroke:0.25px #000">Did you have ANY work-related injuries or illnesses during 2015?</div>
<div class="t" style="left:391.30px;top:365.00px;font:normal normal 10.327px/10.327px 'Liberation Serif',serif;color:#000;-webkit-text-stroke:0.25px #000">Yes. Go to Section 2: Summary of Work-Related Injuries and Illnesses, 2015, directly below.</div>
<div class="t" style="left:390.60px;top:382.00px;font:normal normal 10.320px/10.320px 'Liberation Serif',serif;color:#000;-webkit-text-stroke:0.25px #000">No.   Go to Section 4: Submit Your Data to the Bureau of Labor Statistics (BLS).</div>
<div class="t" style="left:359.00px;top:421.00px;font:normal bold 14.926px/14.926px 'Liberation Sans',sans-serif;color:#000;transform:scaleY(1.070);transform-origin:0 12.00px">Section 2:  Summary of Work-Related Injuries and Illnesses, 2015</div>
<div class="t" style="left:359.00px;top:439.00px;font:normal bold 10.126px/10.126px 'Liberation Serif',serif;color:#000">Instructions:</div>
<div class="t" style="left:358.40px;top:451.00px;font:normal normal 10.280px/10.280px 'Liberation Serif',serif;color:#000;-webkit-text-stroke:0.25px #000">1.</div>
<div class="t" style="left:368.75px;top:451.00px;font:normal normal 10.300px/10.300px 'Liberation Serif',serif;color:#000;-webkit-text-stroke:0.25px #000">Refer to the OSHA Forms for Recording Work-Related Injuries and Illnesses for the location referenced on the survey</div>
<div class="t" style="left:368.75px;top:463.00px;font:normal normal 10.274px/10.274px 'Liberation Serif',serif;color:#000;-webkit-text-stroke:0.25px #000">instruction sheet under "Report for."</div>
<div class="t" style="left:358.40px;top:476.00px;font:normal normal 10.280px/10.280px 'Liberation Serif',serif;color:#000;-webkit-text-stroke:0.25px #000">2.</div>
<div class="t" style="left:368.75px;top:476.00px;font:normal normal 10.278px/10.278px 'Liberation Serif',serif;color:#000;-webkit-text-stroke:0.25px #000">If more than one establishment is noted on the survey instruction sheet you received in the mail, please provide information</div>
<div class="t" style="left:368.75px;top:488.00px;font:normal normal 10.228px/10.228px 'Liberation Serif',serif;color:#000;-webkit-text-stroke:0.25px #000">for all of the establishments specified.</div>
<div class="t" style="left:358.40px;top:500.00px;font:normal normal 10.280px/10.280px 'Liberation Serif',serif;color:#000;-webkit-text-stroke:0.25px #000">3.</div>
<div class="t" style="left:368.75px;top:500.00px;font:normal normal 10.311px/10.311px 'Liberation Serif',serif;color:#000;-webkit-text-stroke:0.25px #000">If any total is zero on your OSHA Form 300A, enter "0" in that total's space below.</div>
<div class="t" style="left:358.40px;top:513.00px;font:normal normal 10.280px/10.280px 'Liberation Serif',serif;color:#000;-webkit-text-stroke:0.25px #000">4.</div>
<div class="t" style="left:368.75px;top:513.00px;font:normal normal 10.287px/10.287px 'Liberation Serif',serif;color:#000;-webkit-text-stroke:0.25px #000">The <b>total</b> Number of Cases recorded in G + H + I + J must equal the <b>total</b> Injury and Illness Types recorded in M (1 + 2 +</div>
<div class="t" style="left:368.75px;top:525.00px;font:normal normal 10.225px/10.225px 'Liberation Serif',serif;color:#000;-webkit-text-stroke:0.25px #000">3 + 4 + 5 + 6).</div>
<div class="t" style="left:394.70px;top:548.00px;font:italic bold 10.213px/10.213px 'Liberation Sans',sans-serif;color:#fff">Number of Cases</div>
<div class="t" style="left:394.40px;top:566.00px;font:normal normal 10.200px/10.200px 'Liberation Serif',serif;color:#000;transform:scaleX(0.9121);-webkit-text-stroke:0.25px #000">Total number of deaths</div>
<div class="t" style="left:516.10px;top:563.00px;font:normal normal 10.200px/10.200px 'Liberation Serif',serif;color:#000;transform:scaleX(0.9137);-webkit-text-stroke:0.25px #000">Total number of cases</div>
<div class="t" style="left:517.70px;top:574.00px;font:normal normal 10.200px/10.200px 'Liberation Serif',serif;color:#000;transform:scaleX(0.9123);-webkit-text-stroke:0.25px #000">with days away from</div>
<div class="t" style="left:547.40px;top:585.00px;font:normal normal 10.200px/10.200px 'Liberation Serif',serif;color:#000;transform:scaleX(0.8920);-webkit-text-stroke:0.25px #000">work</div>
<div class="t" style="left:633.60px;top:563.00px;font:normal normal 10.200px/10.200px 'Liberation Serif',serif;color:#000;transform:scaleX(0.9159);-webkit-text-stroke:0.25px #000">Total number of cases</div>
<div class="t" style="left:638.70px;top:574.00px;font:normal normal 10.200px/10.200px 'Liberation Serif',serif;color:#000;transform:scaleX(0.9125);-webkit-text-stroke:0.25px #000">with job transfer or</div>
<div class="t" style="left:655.80px;top:585.00px;font:normal normal 10.200px/10.200px 'Liberation Serif',serif;color:#000;transform:scaleX(0.9092);-webkit-text-stroke:0.25px #000">restriction</div>
<div class="t" style="left:747.40px;top:563.00px;font:normal normal 10.200px/10.200px 'Liberation Serif',serif;color:#000;transform:scaleX(0.9138);-webkit-text-stroke:0.25px #000">Total number of other</div>
<div class="t" style="left:757.00px;top:574.00px;font:normal normal 10.200px/10.200px 'Liberation Serif',serif;color:#000;transform:scaleX(0.9209);-webkit-text-stroke:0.25px #000">recordable cases</div>
<div class="t" style="left:427.60px;top:615.00px;font:normal normal 10.200px/10.200px 'Liberation Serif',serif;color:#000;transform:scaleX(0.9463);-webkit-text-stroke:0.25px #000">(G)</div>
<div class="t" style="left:555.20px;top:615.00px;font:normal normal 10.200px/10.200px 'Liberation Serif',serif;color:#000;transform:scaleX(0.9110);-webkit-text-stroke:0.25px #000">(H)</div>
<div class="t" style="left:675.50px;top:615.00px;font:normal normal 10.200px/10.200px 'Liberation Serif',serif;color:#000;transform:scaleX(0.9028);-webkit-text-stroke:0.25px #000">(I)</div>
<div class="t" style="left:785.20px;top:615.00px;font:normal normal 10.200px/10.200px 'Liberation Serif',serif;color:#000;transform:scaleX(0.9383);-webkit-text-stroke:0.25px #000">(J)</div>
<div class="t" style="left:392.00px;top:630.00px;font:italic bold 10.197px/10.197px 'Liberation Sans',sans-serif;color:#fff">Number of Days</div>
<div class="t" style="left:395.20px;top:643.00px;font:normal normal 10.200px/10.200px 'Liberation Serif',serif;color:#000;transform:scaleX(0.9146);-webkit-text-stroke:0.25px #000">Total number of days</div>
<div class="t" style="left:404.00px;top:655.00px;font:normal normal 10.200px/10.200px 'Liberation Serif',serif;color:#000;transform:scaleX(0.9064);-webkit-text-stroke:0.25px #000">away from work</div>
<div class="t" style="left:625.20px;top:642.00px;font:normal normal 10.200px/10.200px 'Liberation Serif',serif;color:#000;transform:scaleX(0.9150);-webkit-text-stroke:0.25px #000">Total number of days of job</div>
<div class="t" style="left:638.00px;top:654.00px;font:normal normal 10.200px/10.200px 'Liberation Serif',serif;color:#000;transform:scaleX(0.9083);-webkit-text-stroke:0.25px #000">transfer or restriction</div>
<div class="t" style="left:427.10px;top:690.00px;font:normal normal 10.200px/10.200px 'Liberation Serif',serif;color:#000;transform:scaleX(0.9039);-webkit-text-stroke:0.25px #000">(K)</div>
<div class="t" style="left:682.70px;top:690.00px;font:normal normal 10.200px/10.200px 'Liberation Serif',serif;color:#000;transform:scaleX(0.9444);-webkit-text-stroke:0.25px #000">(L)</div>
<div class="t" style="left:392.00px;top:702.00px;font:italic bold 10.248px/10.248px 'Liberation Sans',sans-serif;color:#fff">Injury and Illness Types</div>
<div class="t" style="left:392.50px;top:712.00px;font:normal normal 10.200px/10.200px 'Liberation Serif',serif;color:#000;transform:scaleX(0.9002);-webkit-text-stroke:0.25px #000">Total number of …</div>
<div class="t" style="left:420.00px;top:724.00px;font:normal normal 10.200px/10.200px 'Liberation Serif',serif;color:#000;transform:scaleX(0.8825);-webkit-text-stroke:0.25px #000">(M)</div>
<div class="t" style="left:390.90px;top:743.00px;font:normal normal 10.200px/10.200px 'Liberation Serif',serif;color:#000;transform:scaleX(0.8996);-webkit-text-stroke:0.25px #000">(1)</div>
<div class="t" style="left:406.40px;top:743.00px;font:normal normal 10.200px/10.200px 'Liberation Serif',serif;color:#000;transform:scaleX(0.9051);-webkit-text-stroke:0.25px #000">Injuries</div>
<div class="t" style="left:390.90px;top:760.00px;font:normal normal 10.200px/10.200px 'Liberation Serif',serif;color:#000;transform:scaleX(0.8996);-webkit-text-stroke:0.25px #000">(2)</div>
<div class="t" style="left:406.40px;top:760.00px;font:normal normal 10.200px/10.200px 'Liberation Serif',serif;color:#000;transform:scaleX(0.9122);-webkit-text-stroke:0.25px #000">Skin disorders</div>
<div class="t" style="left:390.90px;top:777.00px;font:normal normal 10.200px/10.200px 'Liberation Serif',serif;color:#000;transform:scaleX(0.8996);-webkit-text-stroke:0.25px #000">(3)</div>
<div class="t" style="left:406.40px;top:777.00px;font:normal normal 10.200px/10.200px 'Liberation Serif',serif;color:#000;transform:scaleX(0.9132);-webkit-text-stroke:0.25px #000">Respiratory conditions</div>
<div class="t" style="left:617.60px;top:743.00px;font:normal normal 10.200px/10.200px 'Liberation Serif',serif;color:#000;transform:scaleX(0.8996);-webkit-text-stroke:0.25px #000">(4)</div>
<div class="t" style="left:633.20px;top:743.00px;font:normal normal 10.200px/10.200px 'Liberation Serif',serif;color:#000;transform:scaleX(0.9067);-webkit-text-stroke:0.25px #000">Poisonings</div>
<div class="t" style="left:617.60px;top:760.00px;font:normal normal 10.200px/10.200px 'Liberation Serif',serif;color:#000;transform:scaleX(0.8996);-webkit-text-stroke:0.25px #000">(5)</div>
<div class="t" style="left:633.20px;top:760.00px;font:normal normal 10.200px/10.200px 'Liberation Serif',serif;color:#000;transform:scaleX(0.9108);-webkit-text-stroke:0.25px #000">Hearing loss</div>
<div class="t" style="left:617.60px;top:777.00px;font:normal normal 10.200px/10.200px 'Liberation Serif',serif;color:#000;transform:scaleX(0.8996);-webkit-text-stroke:0.25px #000">(6)</div>
<div class="t" style="left:633.20px;top:777.00px;font:normal normal 10.200px/10.200px 'Liberation Serif',serif;color:#000;transform:scaleX(0.9151);-webkit-text-stroke:0.25px #000">All other illnesses</div>
<div class="t" style="left:358.40px;top:800.00px;font:normal normal 10.293px/10.293px 'Liberation Serif',serif;color:#000;-webkit-text-stroke:0.25px #000">If you had any work-related deaths in 2015, please tell us in the Comments in Section 4 of this survey where you assigned/</div>
<div class="t" style="left:358.40px;top:812.00px;font:normal normal 10.289px/10.289px 'Liberation Serif',serif;color:#000;-webkit-text-stroke:0.25px #000">classified each death within the list of items (M1) through (M6) provided under Injury/Illness Types above (e.g., "fatal case</div>
<div class="t" style="left:358.40px;top:825.00px;font:normal normal 10.262px/10.262px 'Liberation Serif',serif;color:#000;-webkit-text-stroke:0.25px #000">was due to injury resulting from fall" or "death resulted from respiratory conditions")</div>
<div class="t" style="left:599.00px;top:854.00px;font:normal bold 8.107px/8.107px 'Liberation Serif',serif;color:#000">Page 2 of 6</div>
</body></html>
